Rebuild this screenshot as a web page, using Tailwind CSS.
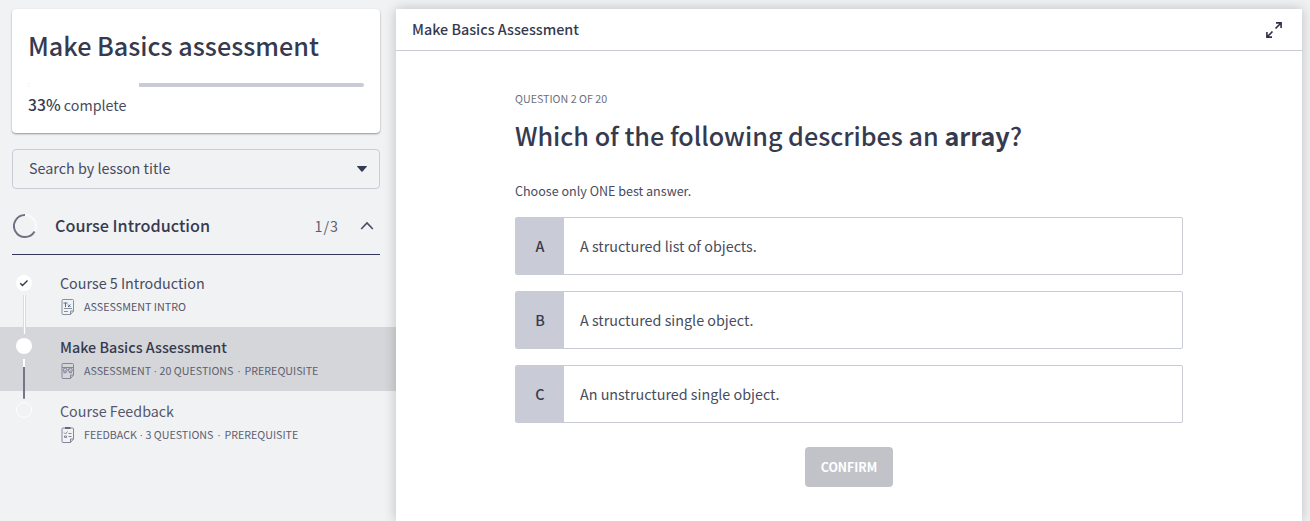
<!DOCTYPE html>
<html lang="en">
<head>
<meta charset="utf-8">
<title>Make Basics Assessment</title>
<script src="https://cdn.jsdelivr.net/npm/@tailwindcss/browser@4"></script>
</head>
<body class="h-[521px] overflow-hidden bg-[#f1f2f4] font-['Noto_Sans_CJK_SC',sans-serif] text-[#363a4f]">
<div class="flex h-full">
  <aside class="w-[396px] shrink-0 pt-[9px]">
    <section class="ml-3 h-[124px] w-[368px] rounded bg-white px-4 pt-5 shadow-[0_1px_2px_rgba(0,0,0,0.4)]">
      <h1 class="h-8 whitespace-nowrap text-[25.150px] font-medium leading-8">Make Basics assessment</h1>
      <div class="mt-[22px] flex h-1 overflow-hidden rounded-sm bg-[#c9ccd6]"><div class="w-[111px] bg-white"></div></div>
      <p class="mt-2 h-5 whitespace-nowrap text-[14.300px] leading-5"><span class="text-[15.700px] font-medium">33%</span> <span class="text-[#484b5e]">complete</span></p>
    </section>
    <div class="ml-3 mt-4 flex h-10 w-[368px] items-center justify-between rounded border border-[#c9ccd6] pl-4 pr-[12px] text-[14.350px] leading-5 text-[#484b5e]">
      <span class="pb-[2px]">Search by lesson title</span>
      <svg class="h-[6px] w-[10px]" viewBox="0 0 10 6" fill="#363a56"><path d="M0.3 0h9.4q.4.3 0 .8L5.6 5.6q-.6.5-1.200 0L.3.8q-.4-.5 0-.8z"/></svg>
    </div>
    <div class="ml-3 flex h-[66px] w-[368px] items-center border-b border-[#34355a] pt-[9px]">
      <svg class="ml-px h-6 w-6" viewBox="0 0 24 24" fill="none" stroke-width="2"><circle cx="12" cy="12" r="11" stroke="#fafafb"/><path d="M12 1a11 11 0 1 0 9.530 16.500" stroke="#6f7084"/></svg>
      <h2 class="ml-[18px] whitespace-nowrap pb-[2px] text-[16.200px] font-medium leading-6">Course Introduction</h2>
      <span class="ml-auto text-[14.3px] leading-6 tracking-[1px] text-[#5d5e70]">1/3</span>
      <svg class="ml-[21px] mr-[6px] h-3 w-[14px]" viewBox="0 0 14 12" fill="none" stroke="#4a4c62" stroke-width="1.6"><path d="M1.200 9L7 3l5.800 6"/></svg>
    </div>
    <ul class="pt-[8px]">
      <li class="flex h-16">
        <div class="relative w-[60px]">
          <svg class="absolute left-4 top-3 h-4 w-4" viewBox="0 0 16 16" fill="none"><circle cx="8" cy="8" r="8" fill="#fff"/><path d="M4.300 8.300l2.200 2.200 5-5" stroke="#33354a" stroke-width="1.400"/></svg>
          <div class="absolute left-[23px] top-8 z-10 h-[39px] w-[3px] border-x border-[#dadbdf] bg-white"></div>
        </div>
        <div class="pt-2">
          <div class="h-[25px] whitespace-nowrap text-[14.3px] leading-6 text-[#484b5e]">Course 5 Introduction</div>
          <div class="flex h-[22px] items-center whitespace-nowrap text-[10.750px] text-[#55576b]">
            <svg class="mr-2 h-4 w-4" viewBox="0 0 16 16" fill="none" stroke="#8590a0"><path d="M3 .5h9.500q1 0 1 1V12l-3 3.500H3q-1 0-1-1v-13q0-1 1-1zM13.500 12h-3v3.500M4 9.500h8M4 12.500h4"/><path d="M3.500 4h4M5.500 4v4M8 5.500l2.500 2.500M10.500 5.500L8 8" stroke="#4a6a8c"/></svg><span>ASSESSMENT INTRO</span>
          </div>
        </div>
      </li>
      <li class="flex h-16 bg-[#d5d6d9]">
        <div class="relative w-[60px]">
          <div class="absolute left-4 top-[11px] h-4 w-4 rounded-full bg-white"></div>
          <div class="absolute left-[23px] top-8 z-10 h-10 w-[2px] rounded bg-[#74758a]"><div class="h-2 bg-white"></div></div>
        </div>
        <div class="pt-2">
          <div class="h-[25px] whitespace-nowrap text-[14.35px] font-medium leading-6">Make Basics Assessment</div>
          <div class="flex h-[22px] items-center whitespace-nowrap text-[10.700px] text-[#5d5e70]">
            <svg class="mr-2 h-4 w-4" viewBox="0 0 16 16" fill="none" stroke="#85869a"><path d="M3 .5h9.500q1 0 1 1V12l-3 3.500H3q-1 0-1-1v-13q0-1 1-1zM13.500 12h-3v3.500M2 4.500h11.500M3.500 9.700h3M9 9.700h3"/><circle cx="5.200" cy="7.100" r="2"/><circle cx="10.300" cy="7.100" r="2"/><path d="M4.500 7l.7.700 1.300-1.400M9.600 6.400l1.400 1.400"/></svg><span>ASSESSMENT</span><span class="w-[8.500px] text-center font-['Liberation_Sans',sans-serif]">·</span><span>20 QUESTIONS</span><span class="w-[11px] text-center font-['Liberation_Sans',sans-serif]">·</span><span>PREREQUISITE</span>
          </div>
        </div>
      </li>
      <li class="flex h-16">
        <div class="relative w-[60px]">
          <div class="absolute left-4 top-[11px] h-4 w-4 rounded-full border border-white"></div>
        </div>
        <div class="pt-2">
          <div class="h-[25px] whitespace-nowrap text-[14.3px] leading-6 text-[#55576b]">Course Feedback</div>
          <div class="flex h-[22px] items-center whitespace-nowrap text-[10.700px] text-[#5d5e70]">
            <svg class="mr-2 h-4 w-4" viewBox="0 0 16 16" fill="none" stroke="#85869a"><path d="M3 1h9.500q1 0 1 1v10l-3 3.500H3q-1 0-1-1V2q0-1 1-1zM13.500 12h-3v3.500M8.500 6.500h3M8.500 9.500h3M4 5.500l1.500 1.500 2-2.500M4.500 9h2v1.500h-2z"/><path d="M5 1h5.500" stroke="#66677c" stroke-width="2"/></svg><span>FEEDBACK</span><span class="w-[8.500px] text-center font-['Liberation_Sans',sans-serif]">·</span><span>3 QUESTIONS</span><span class="w-[11px] text-center font-['Liberation_Sans',sans-serif]">·</span><span>PREREQUISITE</span>
          </div>
        </div>
      </li>
    </ul>
  </aside>
  <main class="relative mt-[9px] w-[906px] shrink-0 bg-white shadow-[0_0_12px_rgba(0,0,0,0.22)]">
    <header class="flex h-[42px] items-center justify-between border-b border-[#c9ccd6] pl-4 pr-5 text-[14.350px] font-medium">
      <span class="pb-[2px]">Make Basics Assessment</span>
      <svg class="h-4 w-4" viewBox="0 0 16 16" fill="none" stroke="#2f3147" stroke-width="1.600"><path d="M9.500 6.500L15 1M10 .9h5.100V6M6.500 9.500L1 15M.9 10v5.100H6"/></svg>
    </header>
    <div class="ml-[119px] w-[668px] pt-[40px]">
      <p class="h-4 whitespace-nowrap text-[10.700px] leading-4 text-[#6d6f7e]">QUESTION 2 OF 20</p>
      <h2 class="mt-[10px] h-9 whitespace-nowrap text-[25.170px] font-medium leading-9">Which of the following describes an <b>array</b>?</h2>
      <p class="mt-7 h-5 whitespace-nowrap text-[12.550px] leading-5 text-[#484b5e]">Choose only ONE best answer.</p>
      <div class="mt-4 flex flex-col gap-4 text-[14.330px]">
        <div class="flex h-[58px] items-center overflow-hidden rounded-[2px] border border-[#c9ccd6]"><div class="flex h-full w-12 items-center justify-center bg-[#c9ccd6] font-medium">A</div><span class="ml-4 text-[#484b5e]">A structured list of objects.</span></div>
        <div class="flex h-[58px] items-center overflow-hidden rounded-[2px] border border-[#c9ccd6]"><div class="flex h-full w-12 items-center justify-center bg-[#c9ccd6] font-medium">B</div><span class="ml-4 text-[#484b5e]">A structured single object.</span></div>
        <div class="flex h-[58px] items-center overflow-hidden rounded-[2px] border border-[#c9ccd6]"><div class="flex h-full w-12 items-center justify-center bg-[#c9ccd6] font-medium">C</div><span class="ml-4 text-[#484b5e]">An unstructured single object.</span></div>
      </div>
      <div class="ml-[290px] mt-6 flex h-10 w-[88px] items-center justify-center rounded bg-[#c2c3c9] text-[12.300px] font-bold text-white">CONFIRM</div>
    </div>
  </main>
</div>
</body>
</html>
